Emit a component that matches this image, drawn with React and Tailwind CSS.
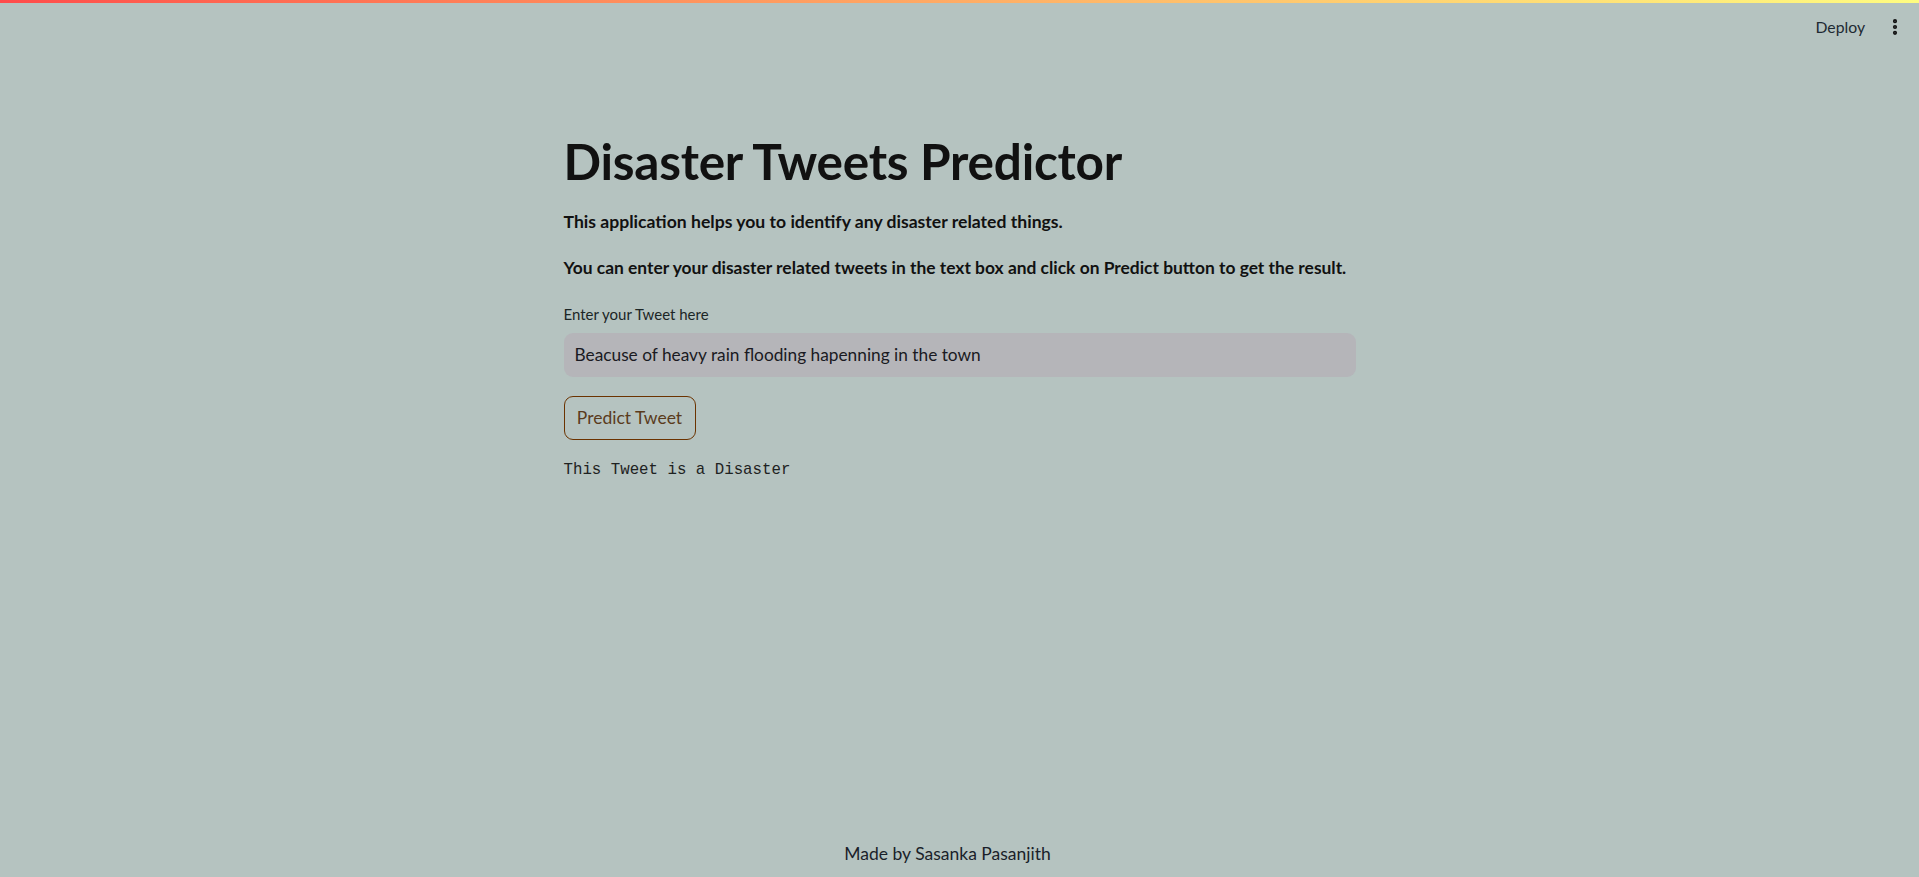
import { EllipsisVertical } from "lucide-react";

const sans = "font-['Lato','Liberation_Sans',sans-serif]";

export default function App() {
	return (
		<div
			className={`min-h-screen w-full bg-[#b5c3c0] flex flex-col ${sans}`}
		>
			{/* header */}
			<div className="h-[3px] w-full bg-gradient-to-r from-[#ff4b4b] to-[#fffd80]" />
			<div className="h-[64px] flex items-start justify-end pt-[14px] pr-[14px] gap-[20px]">
				<button className="text-[15.75px] text-[#1e2a33] leading-[20px] h-[20px]">
					Deploy
				</button>
				<EllipsisVertical size={20} strokeWidth={3} className="text-[#111]" />
			</div>

			{/* main column */}
			<main className="mx-auto w-[792px] flex flex-col flex-1 pt-[65px]">
				<h1 className="text-[49.5px] font-bold leading-[59px] text-[#111] tracking-[-0.005em]">
					Disaster Tweets Predictor
				</h1>
				<p className="mt-[17px] text-[17.6px] font-bold leading-[28px] text-[#111]">
					This application helps you to identify any disaster related things.
				</p>
				<p className="mt-[18px] text-[17.4px] font-bold leading-[28px] text-[#111]">
					You can enter your disaster related tweets in the text box and click
					on Predict button to get the result.
				</p>

				<label className="mt-[22px] text-[15px] leading-[20px] text-[#1c2626]">
					Enter your Tweet here
				</label>
				<div className="mt-[9px] h-[44px] rounded-[9px] bg-[#b5b5b9] flex items-center px-[11px] text-[17.3px] text-[#1a1a22]">
					Beacuse of heavy rain flooding hapenning in the town
				</div>

				<div className="mt-[19px]">
					<button className="h-[44px] w-[132px] rounded-[9px] border border-[#6b3300] text-[17.5px] text-[#5a3b1c]">
						Predict Tweet
					</button>
				</div>

				<pre className="mt-[19px] font-['Liberation_Mono',monospace] text-[15.75px] leading-[22px] text-[#1e2222]">
					This Tweet is a Disaster
				</pre>

				<div className="flex-1" />
			</main>

			<footer className="h-[48px] flex items-start justify-center pr-[24px] pt-[12px] text-[17.5px] text-[#1a1f2a]">
				Made by Sasanka Pasanjith
			</footer>
		</div>
	);
}
